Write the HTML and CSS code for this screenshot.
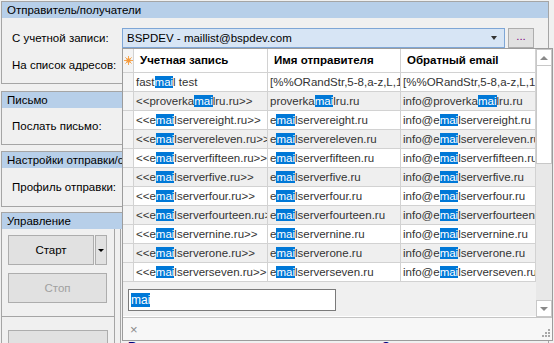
FILE: index.html
```html
<!DOCTYPE html>
<html lang="ru">
<head>
  <meta charset="UTF-8">
  <title>Рассылка</title>
  <link rel="stylesheet" href="styles.css">
</head>
<body>
  <div class="form">
    <!-- Sender / recipients -->
    <div class="group g-sender">
      <div class="group-title">Отправитель/получатели</div>
      <div class="group-body sender-body">
        <div class="field">
          <span class="label">С учетной записи:</span>
          <div class="combo">
            <span>BSPDEV - maillist@bspdev.com</span>
            <span class="combo-arrow"></span>
          </div>
          <button class="dots">...</button>
        </div>
        <div class="field">
          <span class="label">На список адресов:</span>
        </div>
      </div>
    </div>

    <!-- Letter -->
    <div class="group g-letter">
      <div class="group-title">Письмо</div>
      <div class="group-body letter-body">
        <span class="label">Послать письмо:</span>
      </div>
    </div>

    <!-- Send settings -->
    <div class="group g-settings">
      <div class="group-title">Настройки отправки/сообщения</div>
      <div class="group-body settings-body">
        <span class="label">Профиль отправки:</span>
      </div>
    </div>

    <!-- Control -->
    <div class="group g-control">
      <div class="group-title">Управление</div>
      <div class="control-body">
        <div class="control-left">
          <div class="split">
            <button class="btn btn-start">Старт</button>
            <button class="btn btn-drop"><span class="drop-arrow"></span></button>
          </div>
          <button class="btn btn-stop">Стоп</button>
          <div class="separator"></div>
          <button class="btn btn-reset">Сбросить</button>
        </div>
        <div class="control-right">
          <div class="stats">
            <span class="stat">Всего писем:</span>
            <span class="stat stat-sent">Отправлено:</span>
          </div>
        </div>
      </div>
    </div>
  </div>

  <!-- Account lookup popup -->
  <div class="popup">
    <div class="popup-main">
      <div class="popup-left">
        <div class="grid-head">
          <div class="cell ind">
            <svg width="9" height="9" viewBox="0 0 9 9">
              <g stroke="#f7a64f" stroke-width="1">
                <line x1="4.5" y1="0" x2="4.5" y2="9"/>
                <line x1="0" y1="4.5" x2="9" y2="4.5"/>
                <line x1="1.4" y1="1.4" x2="7.6" y2="7.6"/>
                <line x1="7.6" y1="1.4" x2="1.4" y2="7.6"/>
              </g>
              <circle cx="4.5" cy="4.5" r="2.2" fill="#f59a3c"/>
            </svg>
          </div>
          <div class="cell">Учетная запись</div>
          <div class="cell">Имя отправителя</div>
          <div class="cell">Обратный email</div>
        </div>

        <div class="grid-row">
          <div class="cell ind"></div>
          <div class="cell">fast<span class="hl">mai</span>l test</div>
          <div class="cell">[%%ORandStr,5-8,a-z,L,1]</div>
          <div class="cell">[%%ORandStr,5-8,a-z,L,1]</div>
        </div>
        <div class="grid-row alt">
          <div class="cell ind"></div>
          <div class="cell">&lt;&lt;proverka<span class="hl">mai</span>lru.ru&gt;&gt;</div>
          <div class="cell">proverka<span class="hl">mai</span>lru.ru</div>
          <div class="cell">info@proverka<span class="hl">mai</span>lru.ru</div>
        </div>
        <div class="grid-row">
          <div class="cell ind"></div>
          <div class="cell">&lt;&lt;e<span class="hl">mai</span>lservereight.ru&gt;&gt;</div>
          <div class="cell">e<span class="hl">mai</span>lservereight.ru</div>
          <div class="cell">info@e<span class="hl">mai</span>lservereight.ru</div>
        </div>
        <div class="grid-row alt">
          <div class="cell ind"></div>
          <div class="cell">&lt;&lt;e<span class="hl">mai</span>lservereleven.ru&gt;&gt;</div>
          <div class="cell">e<span class="hl">mai</span>lservereleven.ru</div>
          <div class="cell">info@e<span class="hl">mai</span>lservereleven.ru</div>
        </div>
        <div class="grid-row">
          <div class="cell ind"></div>
          <div class="cell">&lt;&lt;e<span class="hl">mai</span>lserverfifteen.ru&gt;&gt;</div>
          <div class="cell">e<span class="hl">mai</span>lserverfifteen.ru</div>
          <div class="cell">info@e<span class="hl">mai</span>lserverfifteen.ru</div>
        </div>
        <div class="grid-row alt">
          <div class="cell ind"></div>
          <div class="cell">&lt;&lt;e<span class="hl">mai</span>lserverfive.ru&gt;&gt;</div>
          <div class="cell">e<span class="hl">mai</span>lserverfive.ru</div>
          <div class="cell">info@e<span class="hl">mai</span>lserverfive.ru</div>
        </div>
        <div class="grid-row">
          <div class="cell ind"></div>
          <div class="cell">&lt;&lt;e<span class="hl">mai</span>lserverfour.ru&gt;&gt;</div>
          <div class="cell">e<span class="hl">mai</span>lserverfour.ru</div>
          <div class="cell">info@e<span class="hl">mai</span>lserverfour.ru</div>
        </div>
        <div class="grid-row alt">
          <div class="cell ind"></div>
          <div class="cell">&lt;&lt;e<span class="hl">mai</span>lserverfourteen.ru&gt;&gt;</div>
          <div class="cell">e<span class="hl">mai</span>lserverfourteen.ru</div>
          <div class="cell">info@e<span class="hl">mai</span>lserverfourteen.ru</div>
        </div>
        <div class="grid-row">
          <div class="cell ind"></div>
          <div class="cell">&lt;&lt;e<span class="hl">mai</span>lservernine.ru&gt;&gt;</div>
          <div class="cell">e<span class="hl">mai</span>lservernine.ru</div>
          <div class="cell">info@e<span class="hl">mai</span>lservernine.ru</div>
        </div>
        <div class="grid-row alt">
          <div class="cell ind"></div>
          <div class="cell">&lt;&lt;e<span class="hl">mai</span>lserverone.ru&gt;&gt;</div>
          <div class="cell">e<span class="hl">mai</span>lserverone.ru</div>
          <div class="cell">info@e<span class="hl">mai</span>lserverone.ru</div>
        </div>
        <div class="grid-row">
          <div class="cell ind"></div>
          <div class="cell">&lt;&lt;e<span class="hl">mai</span>lserverseven.ru&gt;&gt;</div>
          <div class="cell">e<span class="hl">mai</span>lserverseven.ru</div>
          <div class="cell">info@e<span class="hl">mai</span>lserverseven.ru</div>
        </div>

        <div class="search-bar">
          <div class="search"><span class="hl">mai</span></div>
        </div>
      </div>

      <div class="scroll">
        <div class="scroll-btn"><span class="arrow-up"></span></div>
        <div class="scroll-thumb"></div>
        <div class="scroll-btn scroll-down"><span class="arrow-down"></span></div>
      </div>
    </div>

    <div class="popup-footer">
      <span class="close">×</span>
      <svg class="grip" width="9" height="9" viewBox="0 0 9 9" fill="#a8a8a8">
        <rect x="7" y="1" width="2" height="2"/>
        <rect x="4" y="4" width="2" height="2"/>
        <rect x="7" y="4" width="2" height="2"/>
        <rect x="1" y="7" width="2" height="2"/>
        <rect x="4" y="7" width="2" height="2"/>
        <rect x="7" y="7" width="2" height="2"/>
      </svg>
    </div>
  </div>
</body>
</html>
```

FILE: styles.css
```css
* {
  box-sizing: border-box;
}

body {
  margin: 0;
  width: 554px;
  height: 343px;
  overflow: hidden;
  position: relative;
  background: #f0f0f0;
  font-family: "Liberation Sans", Arial, sans-serif;
  font-size: 11.5px;
  color: #000;
}

.form {
  padding: 1px 5px 0 1px;
}

.group {
  border: 1px solid #a5a5a5;
}

.g-letter {
  margin-top: 7px;
}

.g-settings {
  margin-top: 6px;
}

.g-control {
  margin-top: 5px;
}

.group-title {
  height: 16px;
  line-height: 16px;
  padding-left: 5px;
  background: #b7cfe9;
  white-space: nowrap;
  overflow: hidden;
}

.label {
  width: 110px;
  flex: none;
  white-space: nowrap;
}

.sender-body {
  height: 65px;
  padding: 10px 0 0 10px;
  display: flex;
  flex-direction: column;
  gap: 7px;
}

.field {
  display: flex;
  align-items: center;
  height: 20px;
}

.combo {
  width: 383px;
  height: 20px;
  display: flex;
  align-items: center;
  padding-left: 4px;
  border: 1px solid #7ea6d6;
  background: #d7e5f5;
}

.combo-arrow {
  margin-left: auto;
  margin-right: 7px;
  border-left: 3.5px solid transparent;
  border-right: 3.5px solid transparent;
  border-top: 4px solid #333;
}

.dots {
  margin-left: 3px;
  width: 26px;
  height: 20px;
  padding: 0 0 4px;
  border: 1px solid #adadad;
  background: #e1e1e1;
  color: #800080;
  font: inherit;
}

.letter-body {
  height: 36px;
  display: flex;
  align-items: center;
  padding-left: 10px;
}

.settings-body {
  height: 38px;
  display: flex;
  align-items: center;
  padding-left: 10px;
}

.control-body {
  display: flex;
  height: 120px;
}

.control-left {
  width: 113px;
  padding: 6px 0 0 6px;
  border-right: 1px solid #a5a5a5;
}

.btn {
  display: block;
  height: 30px;
  padding: 0;
  border: 1px solid #adadad;
  background: #e1e1e1;
  font: inherit;
  color: #000;
}

.split {
  display: flex;
  gap: 1px;
}

.btn-start {
  width: 86px;
}

.btn-drop {
  width: 12px;
  display: flex;
  align-items: center;
  justify-content: center;
}

.drop-arrow {
  border-left: 3px solid transparent;
  border-right: 3px solid transparent;
  border-top: 3px solid #000;
}

.btn-stop {
  margin-top: 8px;
  width: 99px;
  color: #a0a0a0;
}

.separator {
  margin: 13px 0 0 -7px;
  border-top: 1px solid #a5a5a5;
}

.btn-reset {
  margin-top: 13px;
  width: 100px;
  padding-top: 6px;
}

.control-right {
  flex: 1;
  margin-left: 5px;
  border-left: 1px solid #a5a5a5;
  padding: 111px 0 0 7px;
}

.stats {
  display: flex;
  color: #000080;
  font-weight: bold;
  font-size: 12px;
}

.stat-sent {
  margin-left: 175px;
}

/* lookup popup */
.popup {
  position: absolute;
  left: 122px;
  top: 48px;
  width: 431px;
  height: 293px;
  border: 1px solid #9c9c9c;
  background: #f0f0f0;
  display: flex;
  flex-direction: column;
}

.popup-main {
  display: flex;
  height: 268px;
}

.popup-left {
  width: 413px;
}

.grid-head,
.grid-row {
  display: grid;
  grid-template-columns: 11px 134px 133px 135px;
  background: #fff;
}

.grid-head {
  height: 24px;
  font-weight: bold;
}

.grid-row {
  height: 19px;
  color: #333;
}

.grid-row.alt {
  background: #efefef;
}

.cell {
  border-right: 1px solid #d2d2d2;
  border-bottom: 1px solid #d2d2d2;
  padding: 0 2px;
  white-space: nowrap;
  overflow: hidden;
  line-height: 18px;
}

.grid-head .cell {
  line-height: 23px;
  padding-left: 6px;
}

.grid-head .cell.ind,
.cell.ind {
  padding: 0;
  background: #f4f4f4;
}

.grid-head .cell.ind {
  display: flex;
  align-items: center;
  justify-content: center;
}

.hl {
  background: #0078d7;
  color: #fff;
}

.search-bar {
  height: 35px;
  padding: 7px 0 0 5px;
  border-bottom: 1px solid #fff;
}

.search {
  width: 208px;
  height: 22px;
  border: 1px solid #7a7a7a;
  background: #fff;
  padding-left: 2px;
  line-height: 20px;
  font-size: 12px;
}

.scroll {
  width: 16px;
  display: flex;
  flex-direction: column;
  background: #e8e8e8;
}

.scroll-btn {
  height: 17px;
  border: 1px solid #c8c8c8;
  background: #fff;
  display: flex;
  align-items: center;
  justify-content: center;
}

.scroll-down {
  margin-top: auto;
}

.scroll-thumb {
  height: 98px;
  border: 1px solid #c8c8c8;
  border-top: none;
  background: #fff;
}

.arrow-up {
  border-left: 4px solid transparent;
  border-right: 4px solid transparent;
  border-bottom: 4px solid #8a8a8a;
}

.arrow-down {
  border-left: 4px solid transparent;
  border-right: 4px solid transparent;
  border-top: 4px solid #8a8a8a;
}

.popup-footer {
  height: 23px;
  border-top: 1px solid #c4c4c4;
  background: #f7f7f7;
  display: flex;
  align-items: center;
  padding: 0 2px 0 7px;
}

.close {
  color: #8a8a8a;
  font-size: 13px;
}

.grip {
  margin: 6px 0 0 auto;
}
```
